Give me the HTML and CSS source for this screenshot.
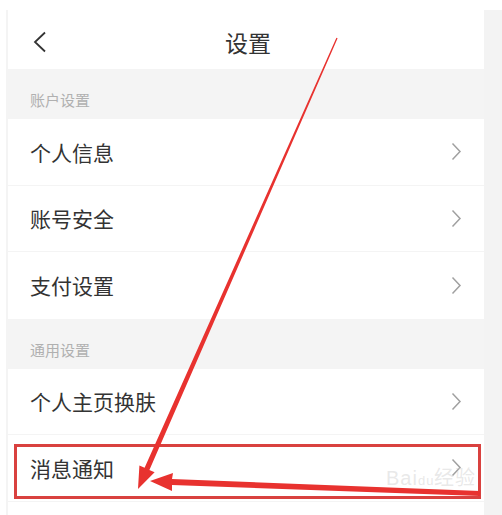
FILE: index.html
```html
<!DOCTYPE html>
<html lang="zh-CN">
<head>
    <meta charset="UTF-8">
    <meta name="viewport" content="width=device-width, initial-scale=1.0">
    <title>设置</title>
    <link rel="stylesheet" href="styles.css">
</head>
<body>
    <div class="screen">
        <!-- Left edge -->
        <div class="edge-left"></div>

        <!-- Settings panel -->
        <div class="panel">
            <header class="topbar">
                <svg class="back" width="14" height="22" viewBox="0 0 14 22">
                    <polyline points="12,1.5 2,11 12,20.5" fill="none" stroke="#333" stroke-width="1.8"/>
                </svg>
                <h1>设置</h1>
            </header>

            <div class="section">账户设置</div>
            <div class="row"><span>个人信息</span><svg class="arrow" width="11" height="19" viewBox="0 0 11 19"><polyline points="1.5,1.5 9,9.5 1.5,17.5" fill="none" stroke="#a0a0a0" stroke-width="1.5"/></svg></div>
            <div class="row"><span>账号安全</span><svg class="arrow" width="11" height="19" viewBox="0 0 11 19"><polyline points="1.5,1.5 9,9.5 1.5,17.5" fill="none" stroke="#a0a0a0" stroke-width="1.5"/></svg></div>
            <div class="row last"><span>支付设置</span><svg class="arrow" width="11" height="19" viewBox="0 0 11 19"><polyline points="1.5,1.5 9,9.5 1.5,17.5" fill="none" stroke="#a0a0a0" stroke-width="1.5"/></svg></div>

            <div class="section">通用设置</div>
            <div class="row"><span>个人主页换肤</span><svg class="arrow" width="11" height="19" viewBox="0 0 11 19"><polyline points="1.5,1.5 9,9.5 1.5,17.5" fill="none" stroke="#a0a0a0" stroke-width="1.5"/></svg></div>
            <div class="row"><span>消息通知</span><svg class="arrow" width="11" height="19" viewBox="0 0 11 19"><polyline points="1.5,1.5 9,9.5 1.5,17.5" fill="none" stroke="#a0a0a0" stroke-width="1.5"/></svg></div>
            <div class="row cut"><span>屏蔽管理</span></div>
        </div>

        <!-- Right edge -->
        <div class="edge-right"></div>
    </div>

    <!-- Annotation: highlight box -->
    <div class="highlight"></div>

    <!-- Annotation: arrows -->
    <svg class="marks" width="502" height="515" viewBox="0 0 502 515">
        <polygon fill="#e8322f" points="337.6,38.3 149.4,469.9 154.6,472.2 138,489 139.4,465.5 144.6,467.8 336.4,37.7"/>
        <polygon fill="#e8322f" points="480,496 172,485 172,491 150,481 173,473 172,479 480,491"/>
    </svg>

    <!-- Watermark -->
    <div class="watermark">Bai<span>du</span>经验</div>
</body>
</html>
```

FILE: styles.css
```css
/* General page */
html, body {
    margin: 0;
    padding: 0;
    height: 100%;
    overflow: hidden;
    background-color: #fff;
    font-family: "Noto Sans CJK SC", "Noto Sans", sans-serif;
}

body {
    position: relative;
}

.screen {
    display: flex;
    min-height: 515px;
}

/* Edges of the phone screenshot */
.edge-left {
    width: 6px;
    margin-top: 10px;
    border-right: 2px solid #f4f4f4;
}

.edge-right {
    flex: 1;
    margin-top: 10px;
    background-color: #f3f3f3;
}

.panel {
    width: 476px;
    display: flex;
    flex-direction: column;
}

/* Title bar */
.topbar {
    height: 69px;
    box-sizing: border-box;
    padding: 14px 0 0 25px;
    display: flex;
    align-items: center;
    position: relative;
}

.topbar h1 {
    margin: 0;
    position: absolute;
    left: 0;
    right: 0;
    top: 14px;
    bottom: 0;
    display: flex;
    align-items: center;
    justify-content: center;
    padding-left: 4px;
    font-size: 23px;
    font-weight: normal;
    color: #333;
}

.back {
    display: block;
}

/* Section labels */
.section {
    height: 50px;
    box-sizing: border-box;
    padding: 0 0 9px 22px;
    display: flex;
    align-items: flex-end;
    background-color: #f4f4f4;
    font-size: 15px;
    color: #b0b0b0;
}

/* Setting rows */
.row {
    height: 66.5px;
    box-sizing: border-box;
    padding: 0 22px;
    display: flex;
    align-items: center;
    justify-content: space-between;
    border-bottom: 1px solid #f4f4f4;
    font-size: 21px;
    color: #333;
}

.row.last {
    border-bottom: none;
}

.row.cut {
    align-items: flex-start;
    padding-top: 11px;
    border-bottom: none;
}

.arrow {
    display: block;
}

/* Red highlight box */
.highlight {
    position: absolute;
    left: 14px;
    top: 444px;
    width: 467px;
    height: 55px;
    box-sizing: border-box;
    border: 3px solid #d9413f;
}

.marks {
    position: absolute;
    left: 0;
    top: 0;
}

/* Faint watermark */
.watermark {
    position: absolute;
    left: 386px;
    top: 462px;
    font-family: "Liberation Sans", sans-serif;
    font-size: 20px;
    color: rgba(205, 205, 205, 0.45);
    letter-spacing: 1px;
}

.watermark span {
    font-size: 13px;
}
```
